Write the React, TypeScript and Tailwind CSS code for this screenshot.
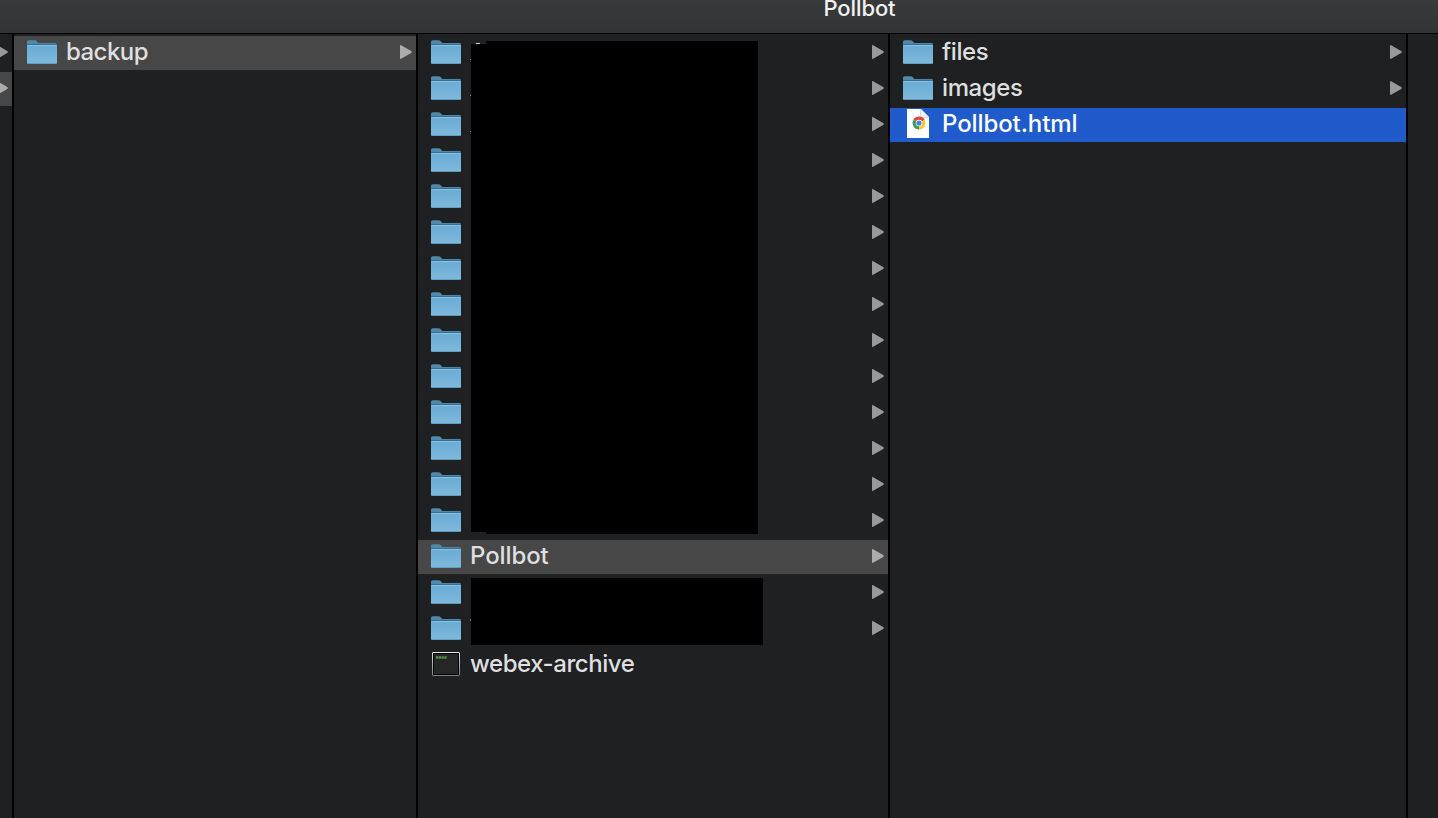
import React from "react";

function FolderIcon() {
  return (
    <svg width="32" height="26" viewBox="0 0 32 26" className="block shrink-0" aria-hidden="true">
      <defs>
        <linearGradient id="folderFront" x1="0" y1="0" x2="0" y2="1">
          <stop offset="0" stopColor="#69acd6" />
          <stop offset="1" stopColor="#7fb9da" />
        </linearGradient>
      </defs>
      <path d="M1 8V1.8Q1 0.2 2.6 0.2H8.6Q10 0.2 10.8 1.2L11.8 2.4Q12.3 3 13.4 3H29.6Q31 3 31 4.4V8Z" fill="#5088a9" />
      <path d="M1 4.5H31" stroke="#3e6c88" strokeWidth="1" />
      <path d="M1 5H31V22.7Q31 24 29.7 24H2.3Q1 24 1 22.7Z" fill="url(#folderFront)" />
      <path d="M1.5 5.5H30.5" stroke="#86c3e6" strokeWidth="1" />
      <path d="M2 23.5H30" stroke="#5d9dc4" strokeWidth="1" />
    </svg>
  );
}

function TerminalIcon() {
  return (
    <svg width="32" height="26" viewBox="0 0 32 26" className="block shrink-0" aria-hidden="true">
      <defs>
        <linearGradient id="terminalFrame" x1="0" y1="0" x2="0" y2="1">
          <stop offset="0" stopColor="#d6e6ec" />
          <stop offset="1" stopColor="#7c8082" />
        </linearGradient>
      </defs>
      <rect x="2.5" y="0.5" width="27" height="23" rx="0.5" fill="#000" stroke="url(#terminalFrame)" />
      <rect x="4" y="2" width="24" height="20" fill="#262626" />
      <path d="M6 5.5H16.8" stroke="#4f9a48" strokeWidth="2.6" strokeDasharray="2.2 .6" />
    </svg>
  );
}

function ChromeDocumentIcon() {
  return (
    <svg width="32" height="30" viewBox="0 0 32 30" className="block shrink-0" aria-hidden="true">
      <path d="M5 0H19L27 8V29H5Z" fill="#fff" />
      <path d="M18.6 0V8.4H27Z" fill="#eef0f3" />
      <path d="M18.6 0.5V8.4H26.5" fill="none" stroke="#c9ced6" strokeWidth="0.8" />
      <path d="M17 14L11.4 10.8A6.4 6.4 0 0 1 22.6 10.8Z" fill="#d94b3d" />
      <path d="M17 14L22.6 10.8A6.4 6.4 0 0 1 17 20.4Z" fill="#f5c63c" />
      <path d="M17 14V20.4A6.4 6.4 0 0 1 11.4 10.8Z" fill="#3f9c5a" />
      <circle cx="17" cy="14" r="3.2" fill="#fff" />
      <circle cx="17" cy="14" r="2.6" fill="#4285dc" />
    </svg>
  );
}

function Arrow({ selected = false }: { selected?: boolean }) {
  return (
    <svg width="13" height="16" viewBox="0 0 13 16" className={`mr-[3px] block shrink-0 ${selected ? "text-[#acacac]" : "text-[#98999a]"}`} aria-hidden="true">
      <path d="M0 1.5Q.6.8 1.6 1.4L11.2 7Q12.6 8 11.2 9L1.6 14.6Q.6 15.2 0 14.5Z" fill="currentColor" />
    </svg>
  );
}

type RowProps = {
  name?: string;
  icon?: "folder" | "terminal" | "chrome";
  state?: "normal" | "active" | "focused";
  tracking?: string;
};

function Row({ name, icon = "folder", state = "normal", tracking = "tracking-[-0.4px]" }: RowProps) {
  const background = state === "active" ? "bg-[#474747]" : state === "focused" ? "bg-[#1f5bcb] text-white" : "";
  return (
    <div className={`flex h-[34px] shrink-0 items-start pl-3 ${background}`}>
      <div className={icon === "chrome" ? "pt-px" : "pt-1"}>
        {icon === "folder" && <FolderIcon />}
        {icon === "terminal" && <TerminalIcon />}
        {icon === "chrome" && <ChromeDocumentIcon />}
      </div>
      <span className={`ml-2 flex-1 whitespace-nowrap leading-[32px] ${tracking}`}>{name}</span>
      {icon === "folder" && <div className="pt-2"><Arrow selected={state === "active"} /></div>}
    </div>
  );
}

export default function App() {
  return (
    <div className="flex h-[818px] w-[1438px] flex-col overflow-hidden bg-[#1f2022] font-['Inter','Liberation_Sans',sans-serif] text-[24px] font-medium text-[#dedfdf]">
      <header className="flex h-[34px] shrink-0 justify-center border-b border-black bg-linear-to-b from-[#38393b] to-[#333436]">
        <h1 className="ml-[281px] h-4 text-[22px] leading-[16px] font-medium tracking-[-0.1px] text-[#f2f2f2]">Pollbot</h1>
      </header>
      <main className="flex min-h-0 flex-1">
        <div className="flex w-[14px] shrink-0 flex-col gap-[2px] overflow-hidden border-r-2 border-black pt-[2px]">
          <div className="flex h-[34px] justify-end pt-2"><Arrow /></div>
          <div className="flex h-[34px] justify-end bg-[#474747] pt-2"><Arrow selected /></div>
        </div>
        <section className="flex w-[404px] shrink-0 flex-col border-r-2 border-black pt-[2px]">
          <Row name="backup" state="active" tracking="tracking-[-0.55px]" />
        </section>
        <section className="relative flex w-[472px] shrink-0 flex-col gap-[2px] border-r-2 border-black pt-[2px]">
          {Array.from({ length: 14 }, (_, index) => <Row key={index} />)}
          <Row name="Pollbot" state="active" tracking="tracking-[-0.1px]" />
          <Row />
          <Row />
          <Row name="webex-archive" icon="terminal" tracking="tracking-[-0.45px]" />
          <div className="absolute top-[10px] left-[53px] h-[488px] w-[287px] bg-black" />
          <div className="absolute top-[7px] left-[68px] h-[493px] w-[272px] bg-black" />
          <div className="absolute top-[9px] left-[58px] h-px w-[4px] rounded-full bg-[#dedfdf]" />
          <div className="absolute top-[544px] left-[53px] h-[67px] w-[292px] bg-black" />
          <div className="absolute top-[25px] left-[52px] h-px w-px bg-[#808182]" />
          <div className="absolute top-[61px] left-[52px] h-px w-px bg-[#808182]" />
          <div className="absolute top-[97px] left-[52px] h-px w-px bg-[#808182]" />
          <div className="absolute top-[585px] left-[52px] h-[2px] w-px bg-[#606162]" />
        </section>
        <section className="flex w-[518px] shrink-0 flex-col gap-[2px] border-r-2 border-black pt-[2px]">
          <Row name="files" tracking="tracking-[-0.4px]" />
          <Row name="images" tracking="tracking-[-0.4px]" />
          <Row name="Pollbot.html" icon="chrome" state="focused" tracking="tracking-[-0.1px]" />
        </section>
      </main>
    </div>
  );
}
